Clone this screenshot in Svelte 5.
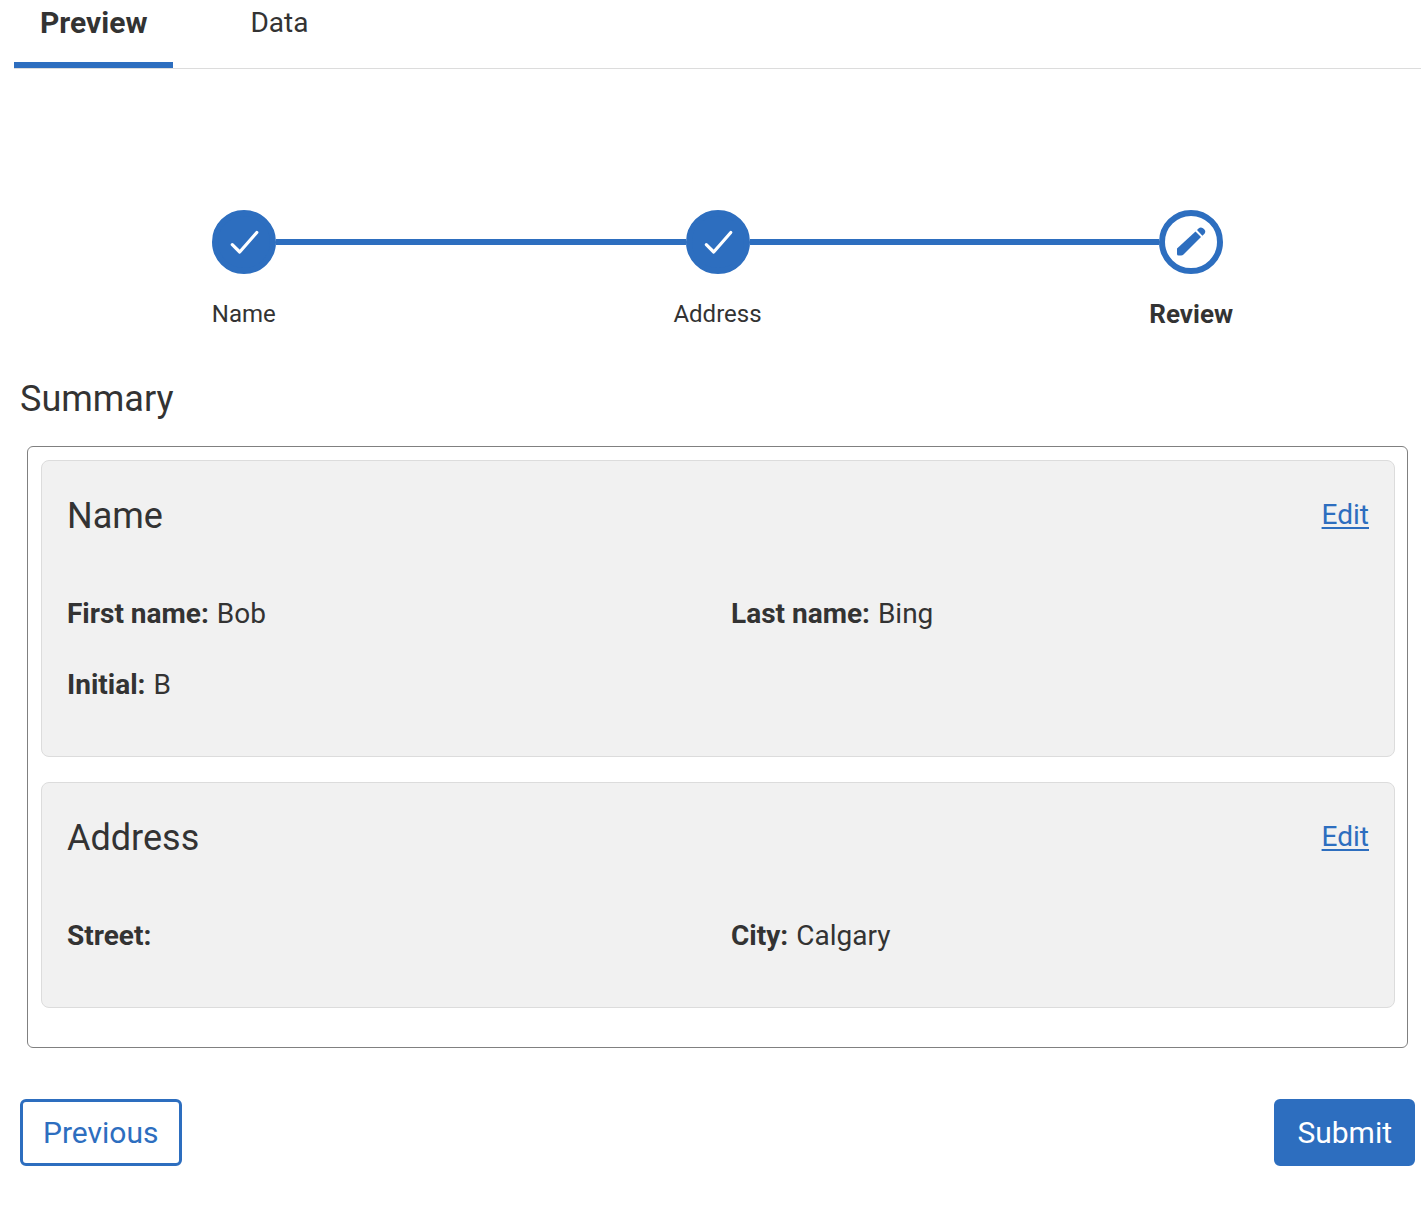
<script>
  const steps = [
    { label: 'Name', done: true },
    { label: 'Address', done: true },
    { label: 'Review', done: false }
  ];
  const sections = [
    {
      title: 'Name',
      fields: [
        { label: 'First name', value: 'Bob' },
        { label: 'Last name', value: 'Bing' },
        { label: 'Initial', value: 'B' }
      ]
    },
    {
      title: 'Address',
      fields: [
        { label: 'Street', value: '' },
        { label: 'City', value: 'Calgary' }
      ]
    }
  ];
  let tab = $state('Preview');
</script>

<div class="tabs" role="tablist">
  {#each ['Preview', 'Data'] as name}
    <button
      class="tab"
      class:active={tab === name}
      role="tab"
      aria-selected={tab === name}
      onclick={() => (tab = name)}>{name}</button>
  {/each}
</div>

<main>
  <ol class="stepper">
    {#each steps as step}
      <li class:current={!step.done}>
        <div class="track">
          <span class="line"></span>
          <span class="circle">
            {#if step.done}
              <svg viewBox="6 6 52 52" aria-hidden="true">
                <path d="M20.3 34.7 L27.7 42 L44.8 22.5" fill="none" stroke="#fff" stroke-width="3.2" stroke-linecap="round" stroke-linejoin="round" />
              </svg>
            {:else}
              <svg viewBox="6 6 52 52" aria-hidden="true">
                <path d="M18 38.5 L36.5 21.5 L42 27 L24.5 44.5 Q23.5 45.5 22 45.5 L19.5 45.5 Q18 45.5 18 44 Z" fill="#2d6ebf" />
                <path d="M38 20 L39.5 18.6 Q41.5 16.7 44 18.2 Q47.5 20.5 45.7 23.5 L43.4 25.8 Z" fill="#2d6ebf" />
              </svg>
            {/if}
          </span>
          <span class="line"></span>
        </div>
        <span class="label">{step.label}</span>
      </li>
    {/each}
  </ol>

  <h1>Summary</h1>

  <div class="summary">
    {#each sections as section}
      <section>
        <header>
          <h2>{section.title}</h2>
          <a href="#edit" aria-label="Edit {section.title}">Edit</a>
        </header>
        <dl>
          {#each section.fields as field}
            <div>
              <dt>{field.label}:</dt>
              <dd>{field.value}</dd>
            </div>
          {/each}
        </dl>
      </section>
    {/each}
  </div>

  <div class="actions">
    <button class="secondary">Previous</button>
    <button class="primary">Submit</button>
  </div>
</main>

<style>
  :global(body) {
    background: #fff;
    color: #333;
    font-family: Roboto, 'Liberation Sans', sans-serif;
    font-size: 28px;
    line-height: 36px;
  }
  button {
    font-family: inherit;
    cursor: pointer;
  }
  .tabs {
    display: flex;
    gap: 51px;
    margin: 0 7px 0 14px;
    border-bottom: 1px solid #dcdcdc;
  }
  .tab {
    padding: 5px 26px 21px;
    border: 0;
    border-bottom: 6px solid transparent;
    background: none;
    color: #333;
    font-size: 28px;
    line-height: 36px;
  }
  .tab.active {
    border-color: #2d6ebf;
    font-size: 30px;
    font-weight: 700;
  }
  main {
    padding: 0 13px 40px 20px;
  }
  .stepper {
    display: grid;
    grid-template-columns: repeat(3, 1fr);
    margin: 141px -13px 0;
    padding: 0;
    list-style: none;
  }
  li {
    display: flex;
    flex-direction: column;
    gap: 24px;
    text-align: center;
  }
  .track {
    display: flex;
    align-items: center;
  }
  .line {
    flex: 1;
    height: 6px;
    background: #2d6ebf;
  }
  li:first-child .line:first-child,
  li:last-child .line:last-child {
    background: transparent;
  }
  .circle {
    border: 6px solid #2d6ebf;
    border-radius: 50%;
    background: #2d6ebf;
  }
  .circle svg {
    display: block;
    width: 52px;
    height: 52px;
  }
  .current .circle {
    background: #fff;
  }
  .label {
    font-size: 24px;
    line-height: 32px;
  }
  .current .label {
    font-size: 26px;
    font-weight: 700;
  }
  h1,
  h2 {
    margin: 0;
    font-size: 36px;
    font-weight: 400;
    line-height: 50px;
  }
  h1 {
    margin: 44px 0 22px;
  }
  .summary {
    display: flex;
    flex-direction: column;
    gap: 25px;
    margin: 0 7px;
    padding: 13px 12px 39px 13px;
    border: 1px solid #808080;
    border-radius: 6px;
  }
  section {
    padding: 30px 25px 36px;
    border: 1px solid #dcdcdc;
    border-radius: 8px;
    background: #f1f1f1;
  }
  header {
    display: flex;
    align-items: flex-start;
    justify-content: space-between;
  }
  a {
    color: #2d6ebf;
    line-height: 48px;
    text-underline-offset: 3px;
  }
  dl {
    display: grid;
    grid-template-columns: 1fr 1fr;
    gap: 35px 26px;
    margin: 55px 0 0;
    padding-bottom: 17px;
  }
  dl div {
    display: flex;
    gap: 8px;
  }
  dt {
    font-weight: 700;
  }
  dd {
    margin: 0;
  }
  .actions {
    display: flex;
    justify-content: space-between;
    margin-top: 51px;
  }
  .actions button {
    padding: 10px 20px;
    border: 3px solid #2d6ebf;
    border-radius: 6px;
    font-size: 30px;
    line-height: 41px;
  }
  .secondary {
    background: #fff;
    color: #2d6ebf;
  }
  .primary {
    background: #2d6ebf;
    color: #fff;
  }
</style>
